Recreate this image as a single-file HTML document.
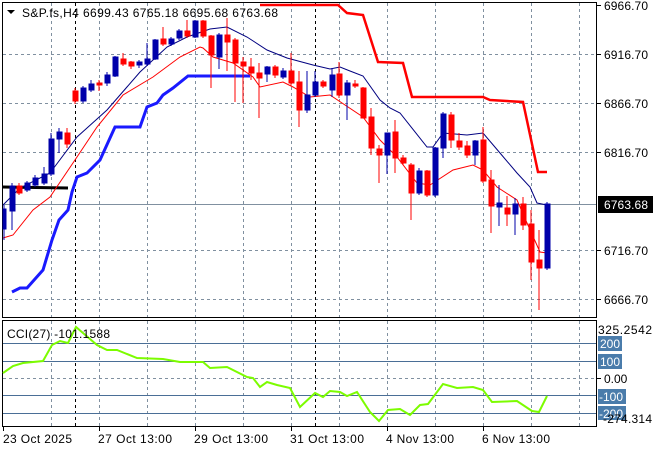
<!DOCTYPE html>
<html><head><meta charset="utf-8"><style>
html,body{margin:0;padding:0;background:#fff;}
svg{display:block;font-family:"Liberation Sans",sans-serif;}
</style></head><body>
<svg width="660" height="450" viewBox="0 0 660 450" xmlns="http://www.w3.org/2000/svg">
<rect width="660" height="450" fill="#fff"/>
<g stroke="#8090a0" stroke-width="1" stroke-dasharray="3,3" fill="none">
<path d="M51.5 3V317M99.5 3V317M147.5 3V317M195.5 3V317M243.5 3V317M291.5 3V317M339.5 3V317M387.5 3V317M435.5 3V317M483.5 3V317M531.5 3V317M579.5 3V317"/>
<path d="M3 54.5H596M3 103.5H596M3 152.5H596M3 250.5H596M3 299.5H596"/>
<path d="M51.5 321V426M99.5 321V426M147.5 321V426M195.5 321V426M243.5 321V426M291.5 321V426M339.5 321V426M387.5 321V426M435.5 321V426M483.5 321V426M531.5 321V426M579.5 321V426"/>
<path d="M3 378.5H596"/>
</g>
<g stroke="#000" stroke-width="1" stroke-dasharray="3,3">
<path d="M75.5 3V317M315.5 3V317M75.5 321V426M315.5 321V426"/>
</g>
<path d="M3 204.5H596" stroke="#8090a0"/>
<g stroke="#4a6e96" stroke-width="1"><path d="M3 343.5H596M3 361.5H596M3 395.5H596M3 413.5H596"/></g>
<g fill="none" stroke="#000" stroke-width="1">
<rect x="2.5" y="2.5" width="594" height="315"/>
<rect x="2.5" y="320.5" width="594" height="106"/>
</g>
<polyline fill="none" stroke="#000" stroke-width="3" points="3,187 68,188"/>
<polyline fill="none" stroke="#1a1aff" stroke-width="3" points="12,292 20,288 27,288 43,270 52,240 59,220 68,210 72,192 77,177 87,173 100,160 115,127 140,127 147,107 157,103 163,95 173,88 188,76 250,76"/>
<polyline fill="none" stroke="#ff0000" stroke-width="2.5" points="260,5 338,5 347,13 363,15 378,62 403,63 412,97 483,97 490,100 523,102 538,172 547,172"/>
<polyline fill="none" stroke="#000080" stroke-width="1" points="3,205 20,188 50,173 77,137 107,110 140,72 167,47 187,37 210,29 227,27 247,37 267,50 287,58 313,65 330,69 340,67 350,71 363,76 380,100 390,108 400,113 427,147 433,147 443,133 467,135 483,133 500,153 517,173 530,187 537,203 547,205"/>
<polyline fill="none" stroke="#ff0000" stroke-width="1" points="3,238 13,235 33,210 50,197 77,157 97,127 123,95 153,77 180,57 200,47 203,48 213,57 233,63 253,77 260,87 283,82 293,87 310,97 330,95 363,117 380,140 397,157 417,183 430,185 453,170 473,165 483,170 497,187 517,200 527,223 540,252 547,253"/>
<polyline fill="none" stroke="#7cfc00" stroke-width="2" points="3,373 13,366 23,363 43,361 52,345 60,341 68,343 76,327 97,345 107,350 117,350 137,358 163,359 180,362 203,362 210,368 227,367 247,377 253,378 260,387 267,382 277,385 290,388 300,407 315,393 323,397 330,391 340,392 347,396 357,392 370,412 379,421 388,410 400,409 410,415 420,405 428,404 443,384 457,388 473,387 483,390 492,402 517,401 532,411 539,412 547,396"/>
<path d="M7 10h8l-4 4z" fill="#000"/>
<text x="22" y="17" font-size="12" fill="#000" textLength="256" lengthAdjust="spacing">S&amp;P.fs,H4  6699.43 6765.18 6695.68 6763.68</text>
<text x="7" y="338" font-size="12" fill="#000" textLength="103" lengthAdjust="spacing">CCI(27) -101.1588</text>
<g stroke="#000"><path d="M597 5.5h4M597 54.5h4M597 103.5h4M597 152.5h4M597 250.5h4M597 299.5h4M597 378.5h4"/></g>
<g font-size="12" fill="#000">
<text x="604" y="10" textLength="44">6966.70</text>
<text x="604" y="59" textLength="44">6916.70</text>
<text x="604" y="108" textLength="44">6866.70</text>
<text x="604" y="157" textLength="44">6816.70</text>
<text x="604" y="255" textLength="44">6716.70</text>
<text x="604" y="304" textLength="44">6666.70</text>
<text x="598" y="334" textLength="54">325.2542</text>
<text x="604" y="383">0.00</text>
</g>
<rect x="598" y="196" width="55" height="17" fill="#000"/>
<text x="604" y="209" font-size="12" fill="#fff" textLength="44">6763.68</text>
<g fill="#4a7cab">
<rect x="598" y="336" width="24" height="15"/>
<rect x="598" y="354" width="24" height="15"/>
<rect x="598" y="389" width="28" height="15"/>
<rect x="598" y="406" width="28" height="14"/>
</g>
<g font-size="12" fill="#fff">
<text x="600" y="348">200</text>
<text x="600" y="366">100</text>
<text x="599" y="401">-100</text>
<text x="599" y="418">-200</text>
</g>
<text x="603" y="423" font-size="12" fill="#000" textLength="49">-274.314</text>
<g stroke="#000"><path d="M3.5 427v4M99.5 427v4M195.5 427v4M291.5 427v4M387.5 427v4M483.5 427v4"/></g>
<g font-size="12" fill="#000">
<text x="3" y="443" textLength="69">23 Oct 2025</text>
<text x="98" y="443" textLength="74">27 Oct 13:00</text>
<text x="194" y="443" textLength="74">29 Oct 13:00</text>
<text x="290" y="443" textLength="74">31 Oct 13:00</text>
<text x="386" y="443" textLength="68">4 Nov 13:00</text>
<text x="482" y="443" textLength="68">6 Nov 13:00</text>
</g>
<g>
<g stroke="#0000aa" fill="#0000aa">
<line x1="4" y1="205" x2="4" y2="240"/><rect x="3" y="209" width="3" height="20"/>
<line x1="12" y1="183" x2="12" y2="230"/><rect x="10" y="186" width="5" height="25"/>
<line x1="27" y1="181" x2="27" y2="192"/><rect x="25" y="183" width="5" height="7"/>
<line x1="35" y1="175" x2="35" y2="187"/><rect x="33" y="178" width="5" height="7"/>
<line x1="44" y1="167" x2="44" y2="185"/><rect x="42" y="174" width="5" height="9"/>
<line x1="51" y1="133" x2="51" y2="176"/><rect x="49" y="139" width="5" height="35"/>
<line x1="59" y1="128" x2="59" y2="153"/><rect x="57" y="132" width="5" height="7"/>
<line x1="83" y1="86" x2="83" y2="103"/><rect x="81" y="88" width="5" height="13"/>
<line x1="91" y1="80" x2="91" y2="92"/><rect x="89" y="84" width="5" height="6"/>
<line x1="107" y1="72" x2="107" y2="86"/><rect x="105" y="75" width="5" height="8"/>
<line x1="115" y1="56" x2="115" y2="77"/><rect x="113" y="57" width="5" height="19"/>
<line x1="139" y1="60" x2="139" y2="68"/><rect x="137" y="62" width="5" height="3"/>
<line x1="147" y1="43" x2="147" y2="66"/><rect x="145" y="59" width="5" height="5"/>
<line x1="155" y1="39" x2="155" y2="60"/><rect x="153" y="40" width="5" height="19"/>
<line x1="171" y1="37" x2="171" y2="46"/><rect x="169" y="39" width="5" height="5"/>
<line x1="179" y1="29" x2="179" y2="40"/><rect x="177" y="31" width="5" height="7"/>
<line x1="195" y1="20" x2="195" y2="38"/><rect x="193" y="21" width="5" height="16"/>
<line x1="219" y1="33" x2="219" y2="69"/><rect x="217" y="35" width="5" height="22"/>
<line x1="267" y1="66" x2="267" y2="82"/><rect x="265" y="67" width="5" height="7"/>
<line x1="283" y1="68" x2="283" y2="79"/><rect x="281" y="71" width="5" height="6"/>
<line x1="307" y1="71" x2="307" y2="113"/><rect x="305" y="95" width="5" height="15"/>
<line x1="315" y1="71" x2="315" y2="97"/><rect x="313" y="82" width="5" height="13"/>
<line x1="332" y1="68" x2="332" y2="97"/><rect x="330" y="75" width="5" height="15"/>
<line x1="347" y1="80" x2="347" y2="120"/><rect x="345" y="83" width="5" height="12"/>
<line x1="387" y1="133" x2="387" y2="174"/><rect x="385" y="133" width="5" height="22"/>
<line x1="419" y1="168" x2="419" y2="195"/><rect x="417" y="171" width="5" height="22"/>
<line x1="435" y1="147" x2="435" y2="197"/><rect x="433" y="148" width="5" height="47"/>
<line x1="443" y1="112" x2="443" y2="158"/><rect x="441" y="114" width="5" height="34"/>
<line x1="475" y1="140" x2="475" y2="165"/><rect x="473" y="141" width="5" height="14"/>
<line x1="499" y1="185" x2="499" y2="226"/><rect x="497" y="203" width="5" height="4"/>
<line x1="515" y1="198" x2="515" y2="235"/><rect x="513" y="204" width="5" height="10"/>
<line x1="547" y1="202" x2="547" y2="270"/><rect x="545" y="204" width="5" height="64"/>
</g>
<g stroke="#ff0000" fill="#ff0000">
<line x1="19" y1="183" x2="19" y2="195"/><rect x="17" y="186" width="5" height="7"/>
<line x1="67" y1="128" x2="67" y2="148"/><rect x="65" y="133" width="5" height="11"/>
<line x1="75" y1="88" x2="75" y2="104"/><rect x="73" y="91" width="5" height="10"/>
<line x1="99" y1="80" x2="99" y2="91"/><rect x="97" y="83" width="5" height="2"/>
<line x1="123" y1="53" x2="123" y2="66"/><rect x="121" y="59" width="5" height="5"/>
<line x1="131" y1="61" x2="131" y2="69"/><rect x="129" y="62" width="5" height="4"/>
<line x1="163" y1="27" x2="163" y2="46"/><rect x="161" y="39" width="5" height="5"/>
<line x1="187" y1="20" x2="187" y2="38"/><rect x="185" y="31" width="5" height="5"/>
<line x1="203" y1="20" x2="203" y2="38"/><rect x="201" y="21" width="5" height="15"/>
<line x1="211" y1="35" x2="211" y2="88"/><rect x="209" y="36" width="5" height="19"/>
<line x1="227" y1="18" x2="227" y2="71"/><rect x="225" y="35" width="5" height="7"/>
<line x1="235" y1="38" x2="235" y2="102"/><rect x="233" y="40" width="5" height="23"/>
<line x1="243" y1="57" x2="243" y2="103"/><rect x="241" y="62" width="5" height="4"/>
<line x1="251" y1="58" x2="251" y2="80"/><rect x="249" y="67" width="5" height="6"/>
<line x1="259" y1="63" x2="259" y2="118"/><rect x="257" y="73" width="5" height="5"/>
<line x1="275" y1="65" x2="275" y2="78"/><rect x="273" y="67" width="5" height="8"/>
<line x1="291" y1="53" x2="291" y2="86"/><rect x="289" y="71" width="5" height="12"/>
<line x1="299" y1="71" x2="299" y2="127"/><rect x="297" y="82" width="5" height="28"/>
<line x1="323" y1="80" x2="323" y2="88"/><rect x="321" y="82" width="5" height="4"/>
<line x1="339" y1="62" x2="339" y2="98"/><rect x="337" y="74" width="5" height="21"/>
<line x1="355" y1="80" x2="355" y2="88"/><rect x="353" y="84" width="5" height="2"/>
<line x1="363" y1="87" x2="363" y2="118"/><rect x="361" y="88" width="5" height="30"/>
<line x1="371" y1="108" x2="371" y2="155"/><rect x="369" y="117" width="5" height="31"/>
<line x1="379" y1="145" x2="379" y2="183"/><rect x="377" y="149" width="5" height="6"/>
<line x1="395" y1="120" x2="395" y2="173"/><rect x="393" y="132" width="5" height="26"/>
<line x1="403" y1="155" x2="403" y2="165"/><rect x="401" y="158" width="5" height="5"/>
<line x1="411" y1="163" x2="411" y2="220"/><rect x="409" y="165" width="5" height="28"/>
<line x1="427" y1="170" x2="427" y2="197"/><rect x="425" y="171" width="5" height="24"/>
<line x1="451" y1="112" x2="451" y2="148"/><rect x="449" y="115" width="5" height="25"/>
<line x1="459" y1="133" x2="459" y2="150"/><rect x="457" y="141" width="5" height="6"/>
<line x1="467" y1="141" x2="467" y2="158"/><rect x="465" y="146" width="5" height="9"/>
<line x1="483" y1="127" x2="483" y2="183"/><rect x="481" y="140" width="5" height="41"/>
<line x1="491" y1="170" x2="491" y2="233"/><rect x="489" y="180" width="5" height="26"/>
<line x1="507" y1="196" x2="507" y2="226"/><rect x="505" y="208" width="5" height="6"/>
<line x1="523" y1="197" x2="523" y2="230"/><rect x="521" y="204" width="5" height="21"/>
<line x1="531" y1="210" x2="531" y2="280"/><rect x="529" y="224" width="5" height="38"/>
<line x1="539" y1="230" x2="539" y2="310"/><rect x="537" y="260" width="5" height="8"/>
</g>
</g>
</svg>
</body></html>
